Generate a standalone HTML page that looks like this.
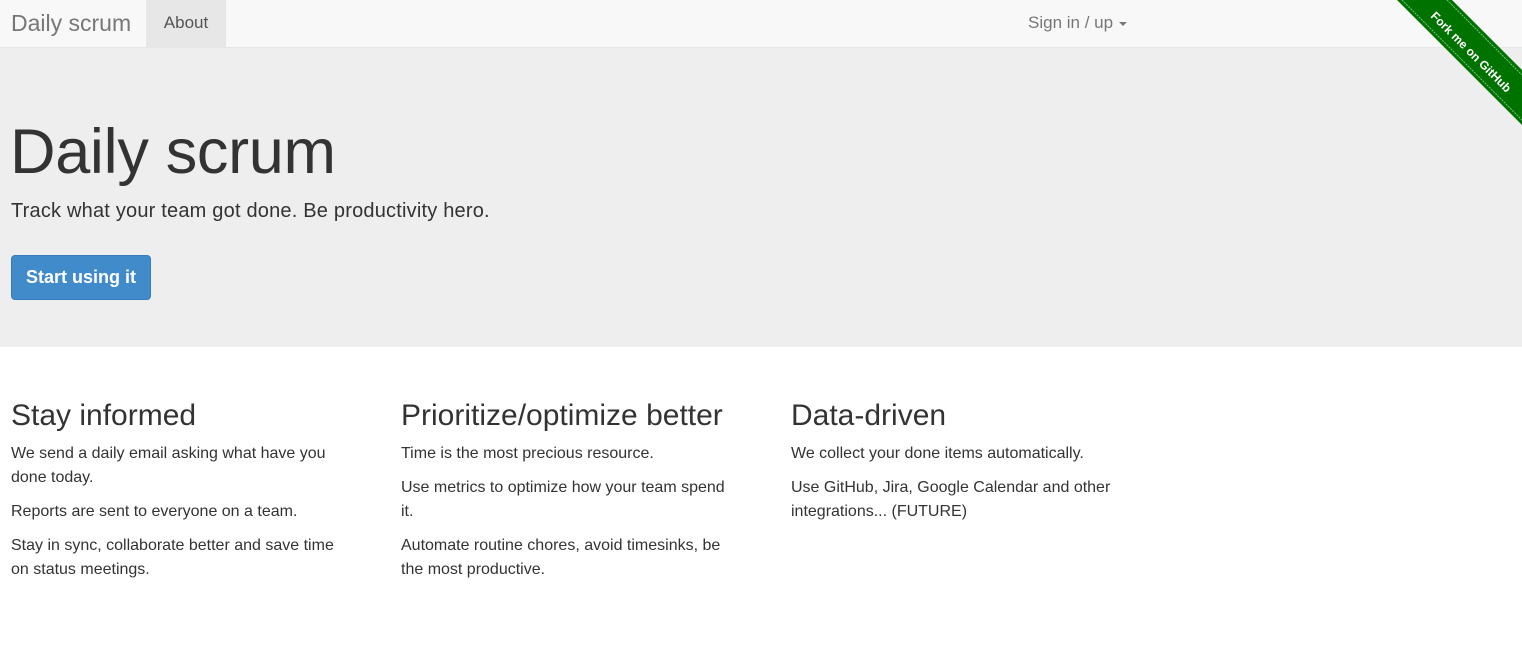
<!DOCTYPE html>
<html><head><meta charset="utf-8"><style>
*{box-sizing:border-box}
body{margin:0;font-family:"Liberation Sans",sans-serif;color:#333;background:#fff;width:1522px;height:651px;overflow:hidden;position:relative}
.nav{height:48px;background:#f8f8f8;border-bottom:1px solid #e7e7e7;position:relative}
.brand{position:absolute;left:11px;top:10px;font-size:23px;color:#777}
.about{position:absolute;left:146px;top:0;width:80px;height:47px;background:#e7e7e7;color:#555;font-size:17px;line-height:46px;text-align:center}
.sign{position:absolute;left:1028px;top:0;line-height:46px;font-size:17px;color:#777}
.caret{display:inline-block;border-top:4px solid #777;border-left:4px solid transparent;border-right:4px solid transparent;vertical-align:middle;margin-left:6px}
.jumbo{height:299px;background:#eee;position:relative}
h1{position:absolute;left:10px;top:64px;margin:0;font-weight:normal;font-size:63px;line-height:80px;letter-spacing:-0.3px}
.lead{position:absolute;left:11px;top:149px;font-size:20px;line-height:28px;letter-spacing:0.2px}
.btn{position:absolute;left:11px;top:207px;width:140px;height:45px;background:#428bca;border:1px solid #357ebd;border-radius:4px;color:#fff;font-size:18px;font-weight:bold;line-height:43px;text-align:center}
.col{position:absolute;top:397px;width:380px}
h2{margin:0 0 7px;font-weight:normal;font-size:30px;line-height:38px}
p{margin:0 0 10px;font-size:16px;line-height:24px;white-space:nowrap}
</style></head><body>
<div class="nav"><div class="brand">Daily scrum</div><div class="about">About</div><div class="sign">Sign in / up<span class="caret"></span></div></div>
<div class="jumbo"><h1>Daily scrum</h1><div class="lead">Track what your team got done. Be productivity hero.</div><div class="btn">Start using it</div></div>
<div class="col" style="left:11px"><h2>Stay informed</h2><p>We send a daily email asking what have you<br>done today.</p><p>Reports are sent to everyone on a team.</p><p>Stay in sync, collaborate better and save time<br>on status meetings.</p></div>
<div class="col" style="left:401px"><h2>Prioritize/optimize better</h2><p>Time is the most precious resource.</p><p>Use metrics to optimize how your team spend<br>it.</p><p>Automate routine chores, avoid timesinks, be<br>the most productive.</p></div>
<div class="col" style="left:791px"><h2>Data-driven</h2><p>We collect your done items automatically.</p><p>Use GitHub, Jira, Google Calendar and other<br>integrations... (FUTURE)</p></div>
<svg width="1522" height="651" style="position:absolute;left:0;top:0" viewBox="0 0 1522 651">
<polygon points="1397,0 1452,0 1522,70 1522,125" fill="#007200"/>
<polyline points="1402,0 1522,120" stroke="#7fbf7f" stroke-width="1" stroke-dasharray="2,1" fill="none"/>
<polyline points="1447,0 1522,75" stroke="#7fbf7f" stroke-width="1" stroke-dasharray="2,1" fill="none"/>
<text x="1471" y="56" transform="rotate(45 1471 52)" text-anchor="middle" fill="#fff" font-family="Liberation Sans,sans-serif" font-size="12" font-weight="bold">Fork me on GitHub</text>
</svg>
</body></html>
